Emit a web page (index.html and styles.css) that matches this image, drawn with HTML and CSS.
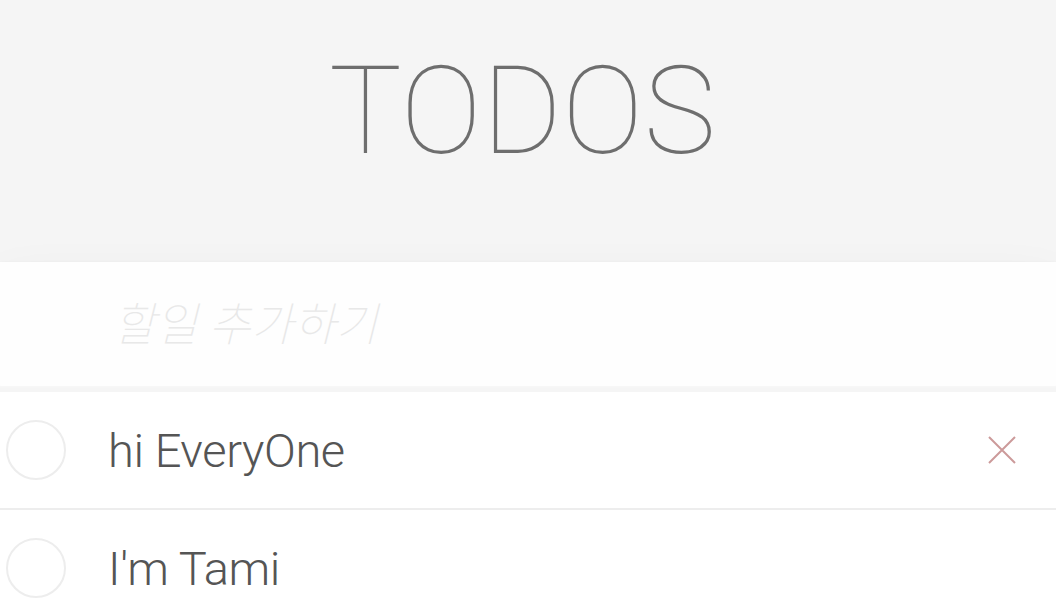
FILE: index.html
```html
<!DOCTYPE html>
<html lang="ko">
<head>
<meta charset="utf-8">
<title>TODOS</title>
<link rel="stylesheet" href="styles.css">
</head>
<body>
  <header class="header">
    <h1 class="title">TODOS</h1>
  </header>
  <section class="app">
    <input class="new-todo" type="text" placeholder="할일 추가하기">
    <ul class="todo-list">
      <li class="todo">
        <span class="toggle"></span>
        <span class="label">hi EveryOne</span>
        <svg class="destroy" width="28" height="28" viewBox="0 0 28 28" aria-hidden="true">
          <path d="M1 1 L27 27 M27 1 L1 27" stroke="#cc9a9a" stroke-width="2" fill="none"/>
        </svg>
      </li>
      <li class="todo">
        <span class="toggle"></span>
        <span class="label">I'm Tami</span>
      </li>
    </ul>
  </section>
</body>
</html>
```
FILE: styles.css
```css
* { box-sizing: border-box; }
html, body { margin: 0; padding: 0; }
body {
  background: #f5f5f5;
  font-family: Roboto, "Liberation Sans", "Noto Sans CJK KR", sans-serif;
  font-weight: 300;
  color: #4d4d4d;
  overflow: hidden;
  height: 608px;
}
.header {
  height: 262px;
  display: flex;
  justify-content: center;
  padding: 42px 11px 0 0;
}
.title {
  margin: 0;
  font-family: Roboto, "Liberation Sans", sans-serif;
  font-weight: 100;
  font-size: 122px;
  line-height: 140px;
  color: #6e6e6e;
  letter-spacing: 0.3px;
}
.app {
  background: #fff;
  box-shadow: 0 2px 4px rgba(0,0,0,0.12), 0 25px 50px rgba(0,0,0,0.08);
}
.new-todo {
  display: block;
  width: 100%;
  height: 126px;
  margin: 0;
  border: 0;
  outline: none;
  background: #fefefe;
  padding: 0 0 0 113px;
  font-family: Roboto, "Noto Sans CJK KR", sans-serif;
  font-size: 46px;
  font-weight: 300;
  color: #4d4d4d;
  box-shadow: inset 0 -2px 1px rgba(0,0,0,0.03);
}
.new-todo::placeholder {
  font-style: italic;
  font-weight: 100;
  color: #e8e8e8;
}
.todo-list {
  list-style: none;
  margin: 0;
  padding: 0;
  border-top: 4px solid #f5f5f5;
}
.todo {
  display: flex;
  align-items: center;
  height: 118px;
  border-bottom: 2px solid #ededed;
  padding: 0 40px 0 6px;
}
.toggle {
  flex: none;
  width: 60px;
  height: 60px;
  border: 2px solid #ededed;
  border-radius: 50%;
}
.label {
  flex: 1;
  margin-left: 42px;
  font-size: 47px;
  font-weight: 300;
  color: #555;
  letter-spacing: -0.4px;
}
.destroy {
  flex: none;
  display: block;
}
```
